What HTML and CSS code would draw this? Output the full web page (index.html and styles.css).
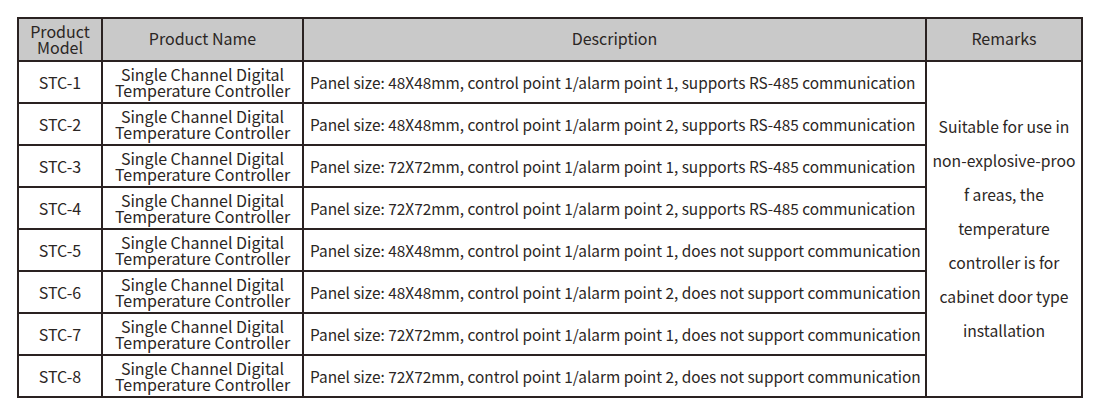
FILE: index.html
```html
<!DOCTYPE html>
<html>
<head>
<meta charset="utf-8">
<link rel="stylesheet" href="styles.css">
</head>
<body>
<table class="spec">
  <colgroup>
    <col class="c-model">
    <col class="c-name">
    <col class="c-desc">
    <col class="c-rem">
  </colgroup>
  <thead>
    <tr>
      <th class="two">Product<br>Model</th>
      <th>Product Name</th>
      <th>Description</th>
      <th>Remarks</th>
    </tr>
  </thead>
  <tbody>
    <tr>
      <td>STC-1</td>
      <td class="two">Single Channel Digital<br>Temperature Controller</td>
      <td class="desc">Panel size: 48X48mm, control point 1/alarm point 1, supports RS-485 communication</td>
      <td class="remarks" rowspan="8">Suitable for use in<br>non-explosive-proo<br>f areas, the<br>temperature<br>controller is for<br>cabinet door type<br>installation</td>
    </tr>
    <tr>
      <td>STC-2</td>
      <td class="two">Single Channel Digital<br>Temperature Controller</td>
      <td class="desc">Panel size: 48X48mm, control point 1/alarm point 2, supports RS-485 communication</td>
    </tr>
    <tr>
      <td>STC-3</td>
      <td class="two">Single Channel Digital<br>Temperature Controller</td>
      <td class="desc">Panel size: 72X72mm, control point 1/alarm point 1, supports RS-485 communication</td>
    </tr>
    <tr>
      <td>STC-4</td>
      <td class="two">Single Channel Digital<br>Temperature Controller</td>
      <td class="desc">Panel size: 72X72mm, control point 1/alarm point 2, supports RS-485 communication</td>
    </tr>
    <tr>
      <td>STC-5</td>
      <td class="two">Single Channel Digital<br>Temperature Controller</td>
      <td class="desc">Panel size: 48X48mm, control point 1/alarm point 1, does not support communication</td>
    </tr>
    <tr>
      <td>STC-6</td>
      <td class="two">Single Channel Digital<br>Temperature Controller</td>
      <td class="desc">Panel size: 48X48mm, control point 1/alarm point 2, does not support communication</td>
    </tr>
    <tr>
      <td>STC-7</td>
      <td class="two">Single Channel Digital<br>Temperature Controller</td>
      <td class="desc">Panel size: 72X72mm, control point 1/alarm point 1, does not support communication</td>
    </tr>
    <tr>
      <td>STC-8</td>
      <td class="two">Single Channel Digital<br>Temperature Controller</td>
      <td class="desc">Panel size: 72X72mm, control point 1/alarm point 2, does not support communication</td>
    </tr>
  </tbody>
</table>
</body>
</html>
```
FILE: styles.css
```css
html, body {
  margin: 0;
  padding: 0;
  background: #ffffff;
}
body {
  padding: 17px 0 0 17px;
  font-family: "Noto Sans CJK SC", "Noto Sans", sans-serif;
  font-size: 16px;
  color: #2b2624;
}
.spec {
  border-collapse: collapse;
  table-layout: fixed;
  width: 1064px;
}
.c-model { width: 84px; }
.c-name { width: 201px; }
.c-desc { width: 623px; }
.c-rem { width: 156px; }
.spec th,
.spec td {
  border: 2px solid #2a2221;
  text-align: center;
  vertical-align: middle;
  padding: 0;
  font-weight: 400;
  white-space: nowrap;
}
.spec th {
  background: #c9c9c9;
  height: 38px;
  line-height: 18px;
  padding-bottom: 3px;
}
.spec th.two {
  height: 39px;
  line-height: 16px;
  padding-bottom: 2px;
}
.spec td {
  height: 40px;
  line-height: 17px;
}
.spec td.two {
  line-height: 16px;
}
.spec td.desc {
  text-align: left;
  padding-left: 6px;
  font-size: 15.4px;
}
.spec td.remarks {
  font-size: 15.7px;
  line-height: 34px;
}
```
